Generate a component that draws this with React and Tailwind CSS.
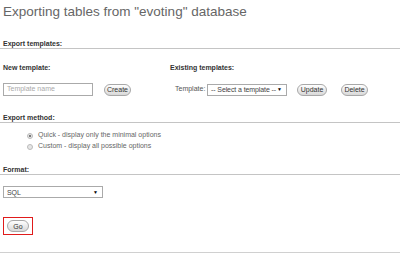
const Pill = ({ children, className = '' }) => (
    <span className={`flex h-[12px] items-center justify-center rounded-full border border-[#a8a8a8] bg-gradient-to-b from-white to-[#d8d8d8] text-[7px] leading-none text-[#333] ${className}`}>
        {children}
    </span>
);

const Select = ({ label, className = '' }) => (
    <span className={`flex h-[12px] items-center justify-between overflow-hidden whitespace-nowrap border border-[#aaa] bg-white pl-[3px] pr-[4px] text-[7px] leading-none text-[#444] ${className}`}>
        <span className="tracking-[-0.1px]">{label}</span>
        <span className="text-[5px] text-black">▼</span>
    </span>
);

const Legend = ({ children }) => (
    <div className="border-b border-[#c4c4c4] pl-[3px] text-[7px] font-bold leading-[8px] text-[#333]">
        {children}
    </div>
);

const Radio = ({ checked, label }) => (
    <div className="flex h-[11px] items-center pl-[27px] text-[7px] text-[#666]">
        <span className="mr-[5px] flex h-[6px] w-[6px] items-center justify-center rounded-full border border-[#bbb] bg-[#e6e6e6]">
            {checked && <span className="h-[2px] w-[2px] rounded-full bg-[#555]" />}
        </span>
        {label}
    </div>
);

const App = () => {
    return (
        <div className="h-[257px] w-[400px] overflow-hidden bg-white font-['Liberation_Sans',Arial,sans-serif]">
            <h2 className="mt-[4px] pl-[3px] text-[13.5px] font-normal leading-[16px] text-[#666]">
                Exporting tables from "evoting" database
            </h2>

            {/* export templates */}
            <div className="mt-[20px]">
                <Legend>Export templates:</Legend>
                <div className="flex">
                    <div className="w-[170px] pl-[3px]">
                        <div className="mt-[15px] text-[7px] font-bold leading-[8px] text-[#333]">New template:</div>
                        <div className="mt-[11px] flex h-[13px] items-center">
                            <span className="flex h-[13px] w-[90px] items-center border border-[#aaa] pl-[3px] text-[7px] text-[#aaa]">
                                Template name
                            </span>
                            <Pill className="ml-[11px] w-[27px]">Create</Pill>
                        </div>
                    </div>
                    <div>
                        <div className="mt-[15px] text-[7px] font-bold leading-[8px] text-[#333]">Existing templates:</div>
                        <div className="mt-[11px] flex h-[13px] items-center pl-[5px]">
                            <span className="w-[32px] text-[7px] text-[#555]">Template:</span>
                            <Select label="-- Select a template --" className="w-[80px]" />
                            <Pill className="ml-[10px] w-[30px]">Update</Pill>
                            <Pill className="ml-[14px] w-[27px]">Delete</Pill>
                        </div>
                    </div>
                </div>
            </div>

            {/* export method */}
            <div className="mt-[18px]">
                <Legend>Export method:</Legend>
                <div className="mt-[7px]">
                    <Radio checked label="Quick - display only the minimal options" />
                    <Radio label="Custom - display all possible options" />
                </div>
            </div>

            {/* format */}
            <div className="mt-[14px]">
                <Legend>Format:</Legend>
                <div className="mt-[11px] pl-[3px]">
                    <Select label="SQL" className="w-[100px]" />
                </div>
            </div>

            <div className="ml-[3px] mt-[19px] flex h-[18px] w-[30px] items-center justify-center border border-[#e01b1b]">
                <Pill className="w-[22px]">Go</Pill>
            </div>

            <div className="mt-[17px] border-t border-[#d0d0d0]" />
        </div>
    );
};

export default App;
